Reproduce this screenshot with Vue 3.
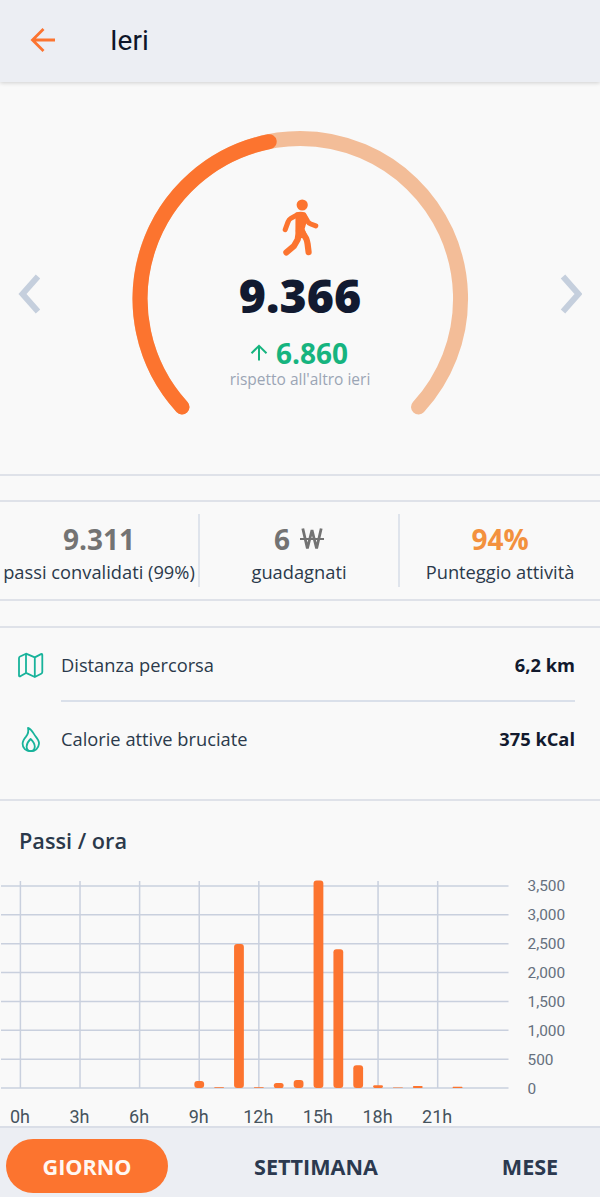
<template>
  <div class="screen">
    <header class="topbar">
      <button class="back" aria-label="Indietro">
        <svg width="26" height="26" viewBox="0 0 26 26">
          <path d="M25 13H2.5M13.5 2L2.5 13l11 11" />
        </svg>
      </button>
      <h1>Ieri</h1>
    </header>

    <section class="summary">
      <button class="nav" aria-label="Giorno precedente">
        <svg width="22" height="40" viewBox="0 0 22 40"><path d="M20 2.5L4.5 20L20 37.5" /></svg>
      </button>
      <div class="gauge">
        <svg class="ring" width="340" height="290" viewBox="130 129 340 290">
          <path class="track" d="M182 407A160.3 160.3 0 1 1 418.5 407" />
          <path class="progress" d="M182 407A160.3 160.3 0 0 1 269.2 141.7" />
        </svg>
        <div class="gauge-body">
          <svg class="walker" width="38" height="60" viewBox="281 198 38 60">
            <circle cx="302.2" cy="205" r="5.6" />
            <path class="torso" d="M295.5 212.8Q301 210.6 305.3 212.8L307.8 218L304.6 229L307.5 237L297 239L295.4 231Z" />
            <path class="limb arm" d="M297.5 214.8L290.8 218.4Q289 219.4 288 222L285.2 229.7" />
            <path class="limb arm" d="M304 215L307.8 221.6Q308.8 223.2 310.8 224L315.8 225.9" />
            <path class="limb" d="M299.2 229L297.7 239.5L293.8 246.2L286.4 252.4" />
            <path class="limb" d="M301 230L306.2 238.6Q307.2 241 307.6 244L308.6 252.2" />
          </svg>
          <strong class="steps">9.366</strong>
          <div class="delta">
            <svg width="18" height="18" viewBox="0 0 18 18"><path d="M9 16.5V2M1.5 9.2l7.5-7.4l7.5 7.4" /></svg>
            <span>6.860</span>
          </div>
          <span class="compare">rispetto all'altro ieri</span>
        </div>
      </div>
      <button class="nav" aria-label="Giorno successivo">
        <svg width="22" height="40" viewBox="0 0 22 40"><path d="M3 2.5L18.5 20L3 37.5" /></svg>
      </button>
    </section>

    <section class="stats">
      <div v-for="s in stats" :key="s.label" class="stat" :class="{ accent: s.accent }">
        <div class="stat-value">
          {{ s.value }}
          <svg v-if="s.coin" class="coin" width="24" height="22" viewBox="0 0 24 22">
            <path d="M2.8 .5L7.4 20.5L12 2L16.6 20.5L21.2 .5" />
            <path class="bar" d="M0 11H24" />
          </svg>
        </div>
        <div class="stat-label">{{ s.label }}</div>
      </div>
    </section>

    <section class="details">
      <div class="row">
        <svg class="row-icon" width="27" height="27" viewBox="0 0 27 27">
          <path d="M2 6.2Q2 5 3.1 4.5L9 1.7L17.8 5.4L24 2.1Q25.3 1.6 25.3 3V20Q25.3 21.2 24.2 21.7L17.8 25L9 20.9L3.3 24.3Q2 24.8 2 23.4ZM9 1.7V20.9M17.8 5.4V25" />
        </svg>
        <div class="row-text">
          <span>Distanza percorsa</span>
          <b>6,2 km</b>
        </div>
      </div>
      <div class="row">
        <svg class="row-icon" width="27" height="27" viewBox="0 0 27 27">
          <path d="M11 1.9C14.9 3.1 16.1 7.2 18.3 10C20.6 12.8 22.3 14.6 22 17.7C21.6 22.5 18.1 25.2 13.6 25.2C8.8 25.2 5.6 22.2 5.6 17.8C5.6 14.8 7.1 12.9 9 10.6C11.2 7.8 12 5.6 11 1.9Z" />
          <path d="M13.6 13C12 14.5 9.6 17.8 9.6 20.6C9.6 23.4 11.2 25.2 13.6 25.2C16.1 25.2 17.8 23.4 17.8 20.6C17.8 17.8 15.2 14.5 13.6 13Z" />
        </svg>
        <div class="row-text">
          <span>Calorie attive bruciate</span>
          <b>375 kCal</b>
        </div>
      </div>
    </section>

    <section class="hourly">
      <h2>Passi / ora</h2>
      <svg class="chart" width="600" height="253" viewBox="0 0 600 253">
        <g class="grid">
          <line v-for="t in yTicks" :key="'y' + t" x1="1" x2="508.5" :y1="yPos(t)" :y2="yPos(t)" />
          <line v-for="h in xTicks" :key="'x' + h" y1="7" :y2="baseline" :x1="xPos(h)" :x2="xPos(h)" />
        </g>
        <rect
          v-for="b in bars"
          :key="b.hour"
          class="hour-bar"
          :x="xPos(b.hour) - 4.9"
          :y="yPos(b.steps)"
          width="9.8"
          :height="baseline - yPos(b.steps)"
          :rx="Math.min(3, (baseline - yPos(b.steps)) / 2)"
        />
        <text v-for="t in yTicks" :key="'yl' + t" class="y-label" x="527.5" :y="yPos(t) + 5.5">{{ t.toLocaleString('en-US') }}</text>
        <text v-for="h in xTicks" :key="'xl' + h" class="x-label" :x="xPos(h) - 0.5" y="249">{{ h }}h</text>
      </svg>
    </section>

    <nav class="tabs">
      <button
        v-for="t in tabs"
        :key="t"
        class="tab"
        :class="{ active: t === activeTab }"
        @click="activeTab = t"
      >{{ t }}</button>
    </nav>
  </div>
</template>

<script setup>
import { ref } from 'vue';

const stats = [
  { value: '9.311', label: 'passi convalidati (99%)' },
  { value: '6', label: 'guadagnati', coin: true },
  { value: '94%', label: 'Punteggio attività', accent: true }
];

const tabs = ['GIORNO', 'SETTIMANA', 'MESE'];
const activeTab = ref('GIORNO');

const yTicks = [3500, 3000, 2500, 2000, 1500, 1000, 500, 0];
const xTicks = [0, 3, 6, 9, 12, 15, 18, 21];

const bars = [
  { hour: 9, steps: 122 },
  { hour: 10, steps: 14 },
  { hour: 11, steps: 2495 },
  { hour: 12, steps: 12 },
  { hour: 13, steps: 88 },
  { hour: 14, steps: 138 },
  { hour: 15, steps: 3595 },
  { hour: 16, steps: 2405 },
  { hour: 17, steps: 395 },
  { hour: 18, steps: 48 },
  { hour: 19, steps: 10 },
  { hour: 20, steps: 34 },
  { hour: 22, steps: 20 }
];

const baseline = 214;
const yPos = (steps) => baseline - steps * 0.05772;
const xPos = (hour) => 20.4 + hour * 19.87;
</script>

<style>
body { background: #f9f9f9; }
</style>

<style scoped>
.screen {
  width: 600px;
  height: 1197px;
  display: flex;
  flex-direction: column;
  overflow: hidden;
  background: #f9f9f9;
  color: #2b394b;
  font-family: "Open Sans", "Noto Sans", sans-serif;
}

button { border: none; background: none; padding: 0; margin: 0; font: inherit; cursor: pointer; }
svg { display: block; flex: none; }
h1, h2 { margin: 0; }

.topbar {
  box-sizing: border-box;
  flex: none;
  height: 82px;
  padding: 0 30px 3px;
  display: flex;
  align-items: center;
  gap: 54px;
  background: #eceef3;
  box-shadow: 0 1px 4px rgba(0, 0, 0, 0.17);
}
.back path { fill: none; stroke: #fc7430; stroke-width: 2.8; }
h1 { font: 400 28px/40px Roboto, sans-serif; color: #0e1529; padding-top: 3px; }

.summary {
  box-sizing: border-box;
  flex: none;
  height: 394px;
  padding: 47px 18px 0;
  display: flex;
  justify-content: space-between;
  border-bottom: 2px solid #dfe2e9;
}
.nav { height: 330px; }
.nav path { fill: none; stroke: #c5cfdd; stroke-width: 6; }

.gauge { display: grid; width: 340px; height: 290px; }
.gauge > * { grid-area: 1 / 1; }
.ring path { fill: none; stroke-width: 15; stroke-linecap: round; }
.ring .track { stroke: #f3bd98; }
.ring .progress { stroke: #fc742f; }

.gauge-body { display: flex; flex-direction: column; align-items: center; padding-top: 69px; }
.walker { fill: #fc742f; }
.limb { fill: none; stroke: #fc742f; stroke-width: 6.2; stroke-linecap: round; stroke-linejoin: round; }
.limb.arm { stroke-width: 5; }
.steps { font-size: 46.5px; line-height: 64px; font-weight: 800; color: #121a30; margin-top: 5px; }
.delta {
  display: flex;
  align-items: center;
  gap: 8px;
  margin: 8px 2px 0 0;
  font-size: 28px;
  line-height: 36px;
  font-weight: 700;
  color: #16b47f;
}
.delta path { fill: none; stroke: #16b47f; stroke-width: 2; }
.compare { font-size: 15.5px; line-height: 20px; color: #9ba5b5; margin-top: -2px; }

.stats {
  box-sizing: border-box;
  flex: none;
  height: 101px;
  margin-top: 24px;
  padding: 12px 0;
  display: grid;
  grid-template-columns: 200px 200px 200px;
  border-top: 2px solid #dfe2e9;
  border-bottom: 2px solid #dfe2e9;
}
.stat {
  box-sizing: border-box;
  display: flex;
  flex-direction: column;
  align-items: center;
  border-right: 2px solid #dfe4ec;
  white-space: nowrap;
}
.stat:last-child { border-right: none; }
.stat-value {
  display: flex;
  align-items: center;
  gap: 10px;
  font-size: 28px;
  line-height: 38px;
  font-weight: 700;
  color: #737373;
  margin-top: 6px;
}
.coin path { fill: none; stroke: #737373; stroke-width: 2.8; }
.coin .bar { stroke-width: 2; }
.accent .stat-value { color: #f3913e; }
.stat-label { font-size: 18.3px; line-height: 26px; margin-top: 1px; }

.details {
  box-sizing: border-box;
  flex: none;
  height: 175px;
  margin-top: 25px;
  padding: 0 25px 0 17px;
  border-top: 2px solid #dfe2e9;
  border-bottom: 2px solid #dfe2e9;
}
.row { height: 74px; display: flex; align-items: center; gap: 17px; }
.row-icon path { fill: none; stroke: #18b39b; stroke-width: 1.8; stroke-linejoin: round; }
.row-text {
  box-sizing: border-box;
  flex: 1;
  height: 74px;
  padding-bottom: 1px;
  display: flex;
  align-items: center;
  justify-content: space-between;
  font-size: 18.3px;
}
.row:first-child .row-text { padding-bottom: 0; border-bottom: 2px solid #dae0ea; }
.row-text b { font-weight: 700; color: #121a2e; }

.hourly { flex: none; height: 325px; display: flex; flex-direction: column; }
h2 { font-size: 21.7px; line-height: 30px; font-weight: 600; padding: 25px 19px 18px; }
.grid line { stroke: #c9d0de; stroke-width: 1.5; }
.hour-bar { fill: #fc742f; }
.y-label { font: 400 15.4px Roboto, sans-serif; fill: #66707e; }
.x-label { font: 400 18px Roboto, sans-serif; fill: #46535d; text-anchor: middle; }

.tabs {
  box-sizing: border-box;
  flex: none;
  height: 71px;
  padding: 11px 6px 0;
  display: grid;
  grid-template-columns: 162px 296px 132px;
  align-items: start;
  border-top: 2px solid #dadee7;
  background: #eceef3;
}
.tab { height: 54px; font-size: 21.6px; font-weight: 700; color: #2b394f; }
.tab.active { border-radius: 27px; background: #fc742f; color: #fff8f2; }
</style>
